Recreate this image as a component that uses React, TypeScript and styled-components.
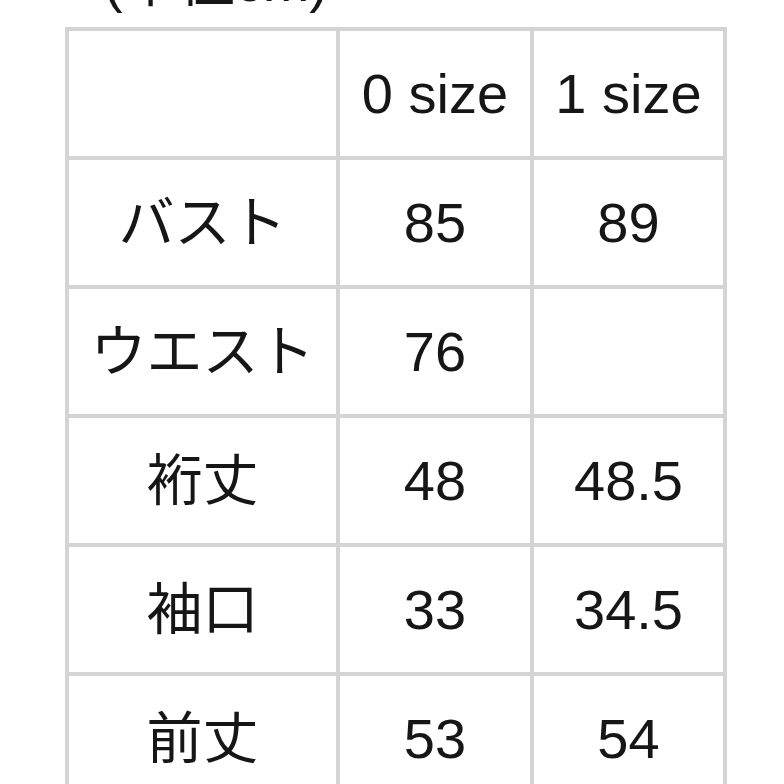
import styled, { createGlobalStyle } from "styled-components";

const GlobalStyle = createGlobalStyle`
  html, body {
    margin: 0;
    padding: 0;
    background: #ffffff;
    overflow: hidden;
  }
  body {
    font-family: "Liberation Sans", "Noto Sans CJK JP", sans-serif;
    color: #161616;
  }
`;

const Page = styled.div`
  width: 784px;
  height: 784px;
  overflow: hidden;
  padding-left: 65px;
  box-sizing: border-box;
`;

const Caption = styled.div`
  margin-top: -46px;
  margin-left: 39px;
  height: 56px;
  font-size: 56px;
  line-height: 56px;
  white-space: nowrap;
`;

const SizeTable = styled.table`
  margin-top: 17px;
  border-collapse: separate;
  border-spacing: 4px;
  background: #d4d4d4;
  table-layout: fixed;
`;

const Cell = styled.td<{ $w: number }>`
  width: ${(p) => p.$w}px;
  height: 125px;
  padding: 0;
  background: #ffffff;
  text-align: center;
  vertical-align: middle;
  font-size: 56px;
  line-height: 1;
  white-space: nowrap;
`;

const widths = [267, 190, 189];

const rows: string[][] = [
  ["", "0 size", "1 size"],
  ["バスト", "85", "89"],
  ["ウエスト", "76", ""],
  ["裄丈", "48", "48.5"],
  ["袖口", "33", "34.5"],
  ["前丈", "53", "54"],
];

export default function App() {
  return (
    <Page>
      <GlobalStyle />
      <Caption>(単位cm)</Caption>
      <SizeTable>
        <tbody>
          {rows.map((row, i) => (
            <tr key={i}>
              {row.map((text, j) => (
                <Cell key={j} $w={widths[j]}>
                  {text}
                </Cell>
              ))}
            </tr>
          ))}
        </tbody>
      </SizeTable>
    </Page>
  );
}
